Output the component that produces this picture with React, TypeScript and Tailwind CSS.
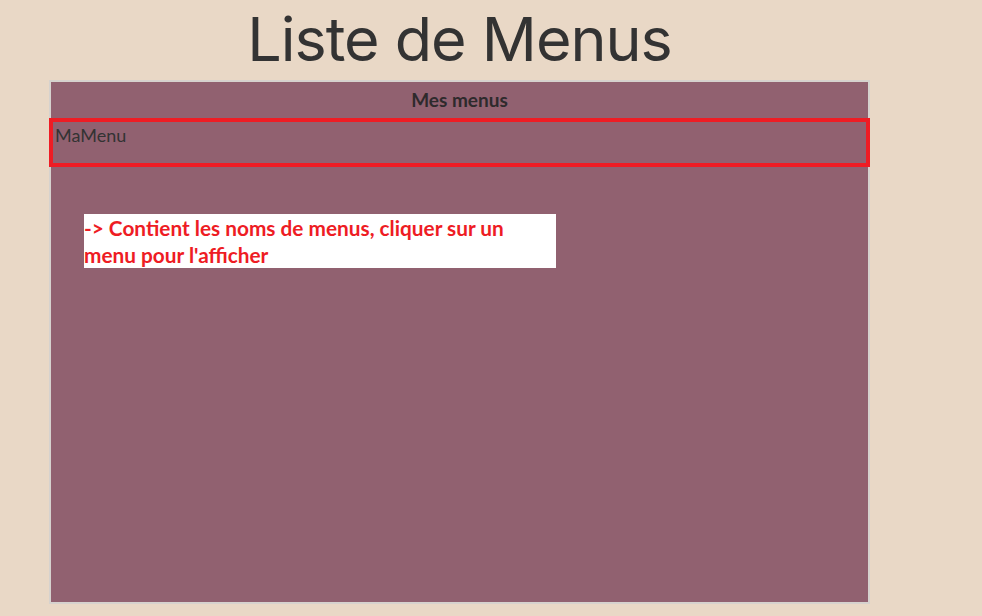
import React from "react";

export default function App() {
  return (
    <div className="w-[982px] h-[616px] bg-[#e9d8c6] overflow-hidden">
      <div className="ml-[49px] w-[821px]">
        <h1 className="h-[80px] pt-[3px] text-center text-[61px] leading-[72px] tracking-[-1px] text-[#333333] font-['Inter',sans-serif] font-normal">
          Liste de Menus
        </h1>
        <div className="relative h-[524px] border-2 border-[#d6d2ce] bg-[#916170]">
          <div className="h-[36px] flex items-center justify-center text-[19px] font-bold text-[#2e2a2c] font-['Lato',sans-serif]">
            Mes menus
          </div>
          <div className="-mx-[2px] h-[49px] border-4 border-[#ee1c24] px-[2px] pt-[2px] text-[18px] leading-[22px] text-[#333333] font-['Lato',sans-serif]">
            MaMenu
          </div>
          <div className="ml-[33px] mt-[47px] w-[472px] h-[54px] bg-white text-[20.8px] leading-[27px] font-bold text-[#ee1c24] font-['Lato',sans-serif]">
            -&gt; Contient les noms de menus, cliquer sur un
            <br />
            menu pour l'afficher
          </div>
        </div>
      </div>
    </div>
  );
}
